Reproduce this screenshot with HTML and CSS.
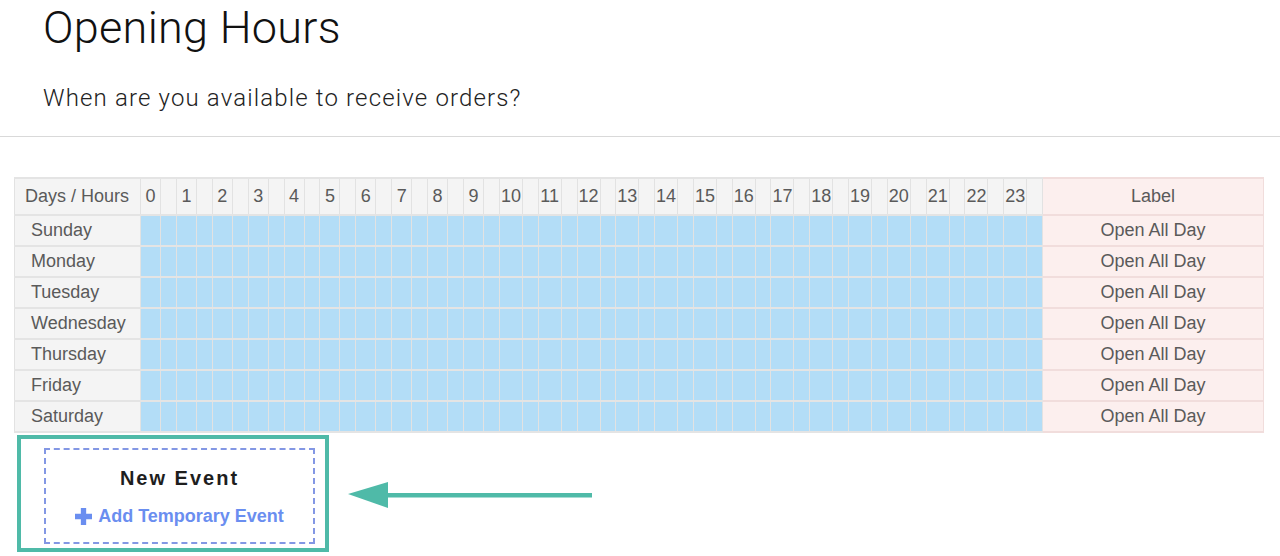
FILE: index.html
```html
<!DOCTYPE html>
<html>
<head>
<meta charset="utf-8">
<title>Opening Hours</title>
<link rel="stylesheet" href="styles.css">
</head>
<body>
<header class="page-head">
  <h1 class="title">Opening Hours</h1>
  <p class="subtitle">When are you available to receive orders?</p>
</header>
<main class="content">
  <table class="hours">
    <colgroup>
      <col class="c-day">
      <col class="c-s"><col class="c-e"><col class="c-s"><col class="c-e"><col class="c-s"><col class="c-e"><col class="c-s"><col class="c-e"><col class="c-s"><col class="c-e">
      <col class="c-s"><col class="c-e"><col class="c-s"><col class="c-e"><col class="c-s"><col class="c-e"><col class="c-s"><col class="c-e"><col class="c-s"><col class="c-e">
      <col class="c-d"><col class="c-e2"><col class="c-d"><col class="c-e2"><col class="c-d"><col class="c-e2"><col class="c-d"><col class="c-e2"><col class="c-d"><col class="c-e2"><col class="c-d"><col class="c-e2"><col class="c-d"><col class="c-e2">
      <col class="c-d"><col class="c-e2"><col class="c-d"><col class="c-e2"><col class="c-d"><col class="c-e2"><col class="c-d"><col class="c-e2"><col class="c-d"><col class="c-e2"><col class="c-d"><col class="c-e2"><col class="c-d"><col class="c-e2">
      <col class="c-label">
    </colgroup>
    <thead>
      <tr>
        <th class="corner">Days / Hours</th>
        <th class="hr">0</th><th class="hr"></th><th class="hr">1</th><th class="hr"></th><th class="hr">2</th><th class="hr"></th><th class="hr">3</th><th class="hr"></th><th class="hr">4</th><th class="hr"></th>
        <th class="hr">5</th><th class="hr"></th><th class="hr">6</th><th class="hr"></th><th class="hr">7</th><th class="hr"></th><th class="hr">8</th><th class="hr"></th><th class="hr">9</th><th class="hr"></th>
        <th class="hr">10</th><th class="hr"></th><th class="hr">11</th><th class="hr"></th><th class="hr">12</th><th class="hr"></th><th class="hr">13</th><th class="hr"></th><th class="hr">14</th><th class="hr"></th><th class="hr">15</th><th class="hr"></th><th class="hr">16</th><th class="hr"></th>
        <th class="hr">17</th><th class="hr"></th><th class="hr">18</th><th class="hr"></th><th class="hr">19</th><th class="hr"></th><th class="hr">20</th><th class="hr"></th><th class="hr">21</th><th class="hr"></th><th class="hr">22</th><th class="hr"></th><th class="hr">23</th><th class="hr"></th>
        <th class="label">Label</th>
      </tr>
    </thead>
    <tbody>
      <tr>
        <th class="day">Sunday</th>
        <td></td><td></td><td></td><td></td><td></td><td></td><td></td><td></td><td></td><td></td><td></td><td></td><td></td><td></td><td></td><td></td><td></td><td></td><td></td><td></td><td></td><td></td><td></td><td></td>
        <td></td><td></td><td></td><td></td><td></td><td></td><td></td><td></td><td></td><td></td><td></td><td></td><td></td><td></td><td></td><td></td><td></td><td></td><td></td><td></td><td></td><td></td><td></td><td></td>
        <td class="label">Open All Day</td>
      </tr>
      <tr>
        <th class="day">Monday</th>
        <td></td><td></td><td></td><td></td><td></td><td></td><td></td><td></td><td></td><td></td><td></td><td></td><td></td><td></td><td></td><td></td><td></td><td></td><td></td><td></td><td></td><td></td><td></td><td></td>
        <td></td><td></td><td></td><td></td><td></td><td></td><td></td><td></td><td></td><td></td><td></td><td></td><td></td><td></td><td></td><td></td><td></td><td></td><td></td><td></td><td></td><td></td><td></td><td></td>
        <td class="label">Open All Day</td>
      </tr>
      <tr>
        <th class="day">Tuesday</th>
        <td></td><td></td><td></td><td></td><td></td><td></td><td></td><td></td><td></td><td></td><td></td><td></td><td></td><td></td><td></td><td></td><td></td><td></td><td></td><td></td><td></td><td></td><td></td><td></td>
        <td></td><td></td><td></td><td></td><td></td><td></td><td></td><td></td><td></td><td></td><td></td><td></td><td></td><td></td><td></td><td></td><td></td><td></td><td></td><td></td><td></td><td></td><td></td><td></td>
        <td class="label">Open All Day</td>
      </tr>
      <tr>
        <th class="day">Wednesday</th>
        <td></td><td></td><td></td><td></td><td></td><td></td><td></td><td></td><td></td><td></td><td></td><td></td><td></td><td></td><td></td><td></td><td></td><td></td><td></td><td></td><td></td><td></td><td></td><td></td>
        <td></td><td></td><td></td><td></td><td></td><td></td><td></td><td></td><td></td><td></td><td></td><td></td><td></td><td></td><td></td><td></td><td></td><td></td><td></td><td></td><td></td><td></td><td></td><td></td>
        <td class="label">Open All Day</td>
      </tr>
      <tr>
        <th class="day">Thursday</th>
        <td></td><td></td><td></td><td></td><td></td><td></td><td></td><td></td><td></td><td></td><td></td><td></td><td></td><td></td><td></td><td></td><td></td><td></td><td></td><td></td><td></td><td></td><td></td><td></td>
        <td></td><td></td><td></td><td></td><td></td><td></td><td></td><td></td><td></td><td></td><td></td><td></td><td></td><td></td><td></td><td></td><td></td><td></td><td></td><td></td><td></td><td></td><td></td><td></td>
        <td class="label">Open All Day</td>
      </tr>
      <tr>
        <th class="day">Friday</th>
        <td></td><td></td><td></td><td></td><td></td><td></td><td></td><td></td><td></td><td></td><td></td><td></td><td></td><td></td><td></td><td></td><td></td><td></td><td></td><td></td><td></td><td></td><td></td><td></td>
        <td></td><td></td><td></td><td></td><td></td><td></td><td></td><td></td><td></td><td></td><td></td><td></td><td></td><td></td><td></td><td></td><td></td><td></td><td></td><td></td><td></td><td></td><td></td><td></td>
        <td class="label">Open All Day</td>
      </tr>
      <tr>
        <th class="day">Saturday</th>
        <td></td><td></td><td></td><td></td><td></td><td></td><td></td><td></td><td></td><td></td><td></td><td></td><td></td><td></td><td></td><td></td><td></td><td></td><td></td><td></td><td></td><td></td><td></td><td></td>
        <td></td><td></td><td></td><td></td><td></td><td></td><td></td><td></td><td></td><td></td><td></td><td></td><td></td><td></td><td></td><td></td><td></td><td></td><td></td><td></td><td></td><td></td><td></td><td></td>
        <td class="label">Open All Day</td>
      </tr>
    </tbody>
  </table>

  <div class="event-area">
    <div class="highlight">
      <div class="new-event">
        <div class="new-event-title">New Event</div>
        <a class="add-link" href="#">
          <svg class="plus" viewBox="0 0 16 16" width="17" height="17" aria-hidden="true">
            <path d="M5.5 0h5v5.5h5.5v5h-5.5v5.5h-5v-5.5H0v-5h5.5z" fill="currentColor"/>
          </svg>
          <span>Add Temporary Event</span>
        </a>
      </div>
    </div>
    <svg class="arrow" viewBox="0 0 250 32" width="250" height="32" aria-hidden="true">
      <polygon points="3,15 43,3 43,29" fill="#4fbaa8"/>
      <rect x="42" y="14" width="205" height="4.5" fill="#4fbaa8"/>
    </svg>
  </div>
</main>
</body>
</html>
```
FILE: styles.css
```css
html, body {
  margin: 0;
  padding: 0;
  background: #ffffff;
}

body {
  font-family: "Liberation Sans", Arial, Helvetica, sans-serif;
  color: #555;
}

.page-head {
  padding: 0 43px;
  border-bottom: 1px solid #d9d9d9;
  height: 137px;
  box-sizing: border-box;
}

.title {
  margin: 0;
  padding-top: 2px;
  font-family: Roboto, "Liberation Sans", sans-serif;
  font-weight: 300;
  font-size: 45px;
  line-height: 52px;
  color: #111;
  letter-spacing: 0.3px;
}

.subtitle {
  margin: 30px 0 0;
  font-family: Roboto, "Liberation Sans", sans-serif;
  font-weight: 300;
  font-size: 24px;
  line-height: 28px;
  color: #222;
  letter-spacing: 1.15px;
}

.content {
  padding: 40px 16px 0 14px;
  position: relative;
}

.hours {
  table-layout: fixed;
  width: 1250px;
  border-collapse: collapse;
  border: 1px solid #c6c6c6;
  font-size: 18px;
  color: #5a5a5a;
}

.c-day { width: 126px; }
.c-s { width: 20px; }
.c-e { width: 15.9px; }
.c-d { width: 23px; }
.c-e2 { width: 15.8px; }

.hours th,
.hours td {
  padding: 0;
  font-weight: 400;
  border-left: 1px solid #e2e2e2;
  border-right: 1px solid #e2e2e2;
  border-top: 2px solid #e4e4e4;
  border-bottom: 2px solid #e4e4e4;
}

.hours thead tr {
  height: 37px;
}

.hours tbody tr {
  height: 31px;
}

.hours thead th {
  background: #f4f4f4;
}

.corner {
  text-align: left;
  padding-left: 10px !important;
  white-space: nowrap;
}

.hr {
  text-align: center;
  white-space: nowrap;
  overflow: visible;
}

.day {
  background: #f4f4f4;
  text-align: left;
  padding-left: 16px !important;
}

.hours td {
  background: #b3ddf7;
}

.hours .label {
  background: #fcefee;
  text-align: center;
  border-color: #f1dddc;
}

.event-area {
  position: relative;
  padding: 2px 0 0 3px;
}

.highlight {
  width: 271px;
  height: 96px;
  border: 4px solid #4fbaa8;
  padding: 9px 10px 4px 23px;
  box-sizing: content-box;
  display: flex;
}

.new-event {
  flex: 1;
  border: 2px dashed #8397e4;
  display: flex;
  flex-direction: column;
  align-items: center;
  justify-content: flex-start;
  padding-top: 16px;
  gap: 15px;
}

.new-event-title {
  font-weight: 700;
  font-size: 20px;
  letter-spacing: 2px;
  color: #1e1e1e;
  line-height: 24px;
}

.add-link {
  display: flex;
  align-items: center;
  gap: 6px;
  color: #6a8ef0;
  text-decoration: none;
  font-weight: 700;
  font-size: 18px;
  line-height: 22px;
}

.plus {
  display: block;
  width: 17px;
  height: 17px;
}

.arrow {
  position: absolute;
  left: 331px;
  top: 46px;
}
```
